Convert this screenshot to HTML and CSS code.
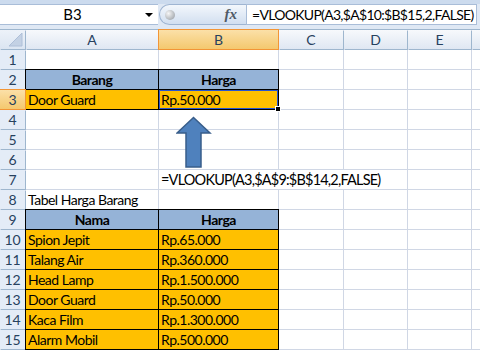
FILE: index.html
```html
<!DOCTYPE html>
<html>
<head>
<meta charset="utf-8">
<link rel="stylesheet" href="styles.css">
</head>
<body>
<div class="fbar">
  <div class="namebox"><span class="ref">B3</span><span class="drop"></span></div>
  <div class="fxbox"><span class="ball"></span><span class="fx">fx</span></div>
  <div class="finput">=VLOOKUP(A3,$A$10:$B$15,2,FALSE)</div>
</div>
<div class="sheet">
  <div class="corner"><svg width="25" height="19" viewBox="0 0 25 19"><polygon points="22,3 22,16 9,16" fill="#c3d1e4" stroke="#aebfd8" stroke-width="1"/></svg></div>
  <div class="ch">A</div><div class="ch sel">B</div><div class="ch">C</div><div class="ch">D</div><div class="ch">E</div><div class="ch"></div>

  <div class="rh">1</div><div class="c"></div><div class="c"></div><div class="c"></div><div class="c"></div><div class="c"></div><div class="c"></div>
  <div class="rh">2</div><div class="c hdr">Barang</div><div class="c hdr">Harga</div><div class="c"></div><div class="c"></div><div class="c"></div><div class="c"></div>
  <div class="rh sel">3</div><div class="c org">Door Guard</div><div class="c org cur">Rp.50.000</div><div class="c"></div><div class="c"></div><div class="c"></div><div class="c"></div>
  <div class="rh">4</div><div class="c"></div><div class="c"></div><div class="c"></div><div class="c"></div><div class="c"></div><div class="c"></div>
  <div class="rh">5</div><div class="c"></div><div class="c"></div><div class="c"></div><div class="c"></div><div class="c"></div><div class="c"></div>
  <div class="rh">6</div><div class="c"></div><div class="c"></div><div class="c"></div><div class="c"></div><div class="c"></div><div class="c"></div>
  <div class="rh">7</div><div class="c"></div><div class="c span3 formula">=VLOOKUP(A3,$A$9:$B$14,2,FALSE)</div><div class="c"></div><div class="c"></div>
  <div class="rh">8</div><div class="c">Tabel Harga Barang</div><div class="c"></div><div class="c"></div><div class="c"></div><div class="c"></div><div class="c"></div>
  <div class="rh">9</div><div class="c hdr">Nama</div><div class="c hdr">Harga</div><div class="c"></div><div class="c"></div><div class="c"></div><div class="c"></div>
  <div class="rh">10</div><div class="c org">Spion Jepit</div><div class="c org">Rp.65.000</div><div class="c"></div><div class="c"></div><div class="c"></div><div class="c"></div>
  <div class="rh">11</div><div class="c org">Talang Air</div><div class="c org">Rp.360.000</div><div class="c"></div><div class="c"></div><div class="c"></div><div class="c"></div>
  <div class="rh">12</div><div class="c org">Head Lamp</div><div class="c org">Rp.1.500.000</div><div class="c"></div><div class="c"></div><div class="c"></div><div class="c"></div>
  <div class="rh">13</div><div class="c org">Door Guard</div><div class="c org">Rp.50.000</div><div class="c"></div><div class="c"></div><div class="c"></div><div class="c"></div>
  <div class="rh">14</div><div class="c org">Kaca Film</div><div class="c org">Rp.1.300.000</div><div class="c"></div><div class="c"></div><div class="c"></div><div class="c"></div>
  <div class="rh">15</div><div class="c org">Alarm Mobil</div><div class="c org">Rp.500.000</div><div class="c"></div><div class="c"></div><div class="c"></div><div class="c"></div>

  <svg class="arrow" width="36" height="54" viewBox="0 0 36 54"><polygon points="17.5,1.5 34,17 25,17 25,51 10,51 10,17 1,17" fill="#4f81bd" stroke="#385d8a" stroke-width="1.5" stroke-linejoin="miter"/></svg>
</div>
</body>
</html>
```
FILE: styles.css
```css
body {
  margin: 0;
  width: 480px;
  height: 350px;
  overflow: hidden;
  background: #fff;
  font-family: Lato, "Liberation Sans", sans-serif;
  font-size: 14px;
  color: #000;
}

.fbar {
  height: 29px;
  box-sizing: border-box;
  padding-top: 4px;
  display: flex;
  align-items: flex-start;
  background: linear-gradient(#ccdbee 0, #ccdbee 4px, #dfe8f4 4px);
}

.namebox {
  width: 158px;
  height: 21px;
  box-sizing: border-box;
  background: #fff;
  border-top: 1px solid #a9bdd8;
  border-bottom: 1px solid #a9bdd8;
  display: flex;
  align-items: center;
}

.namebox .ref {
  flex: 1;
  text-align: center;
  line-height: 19px;
  font-size: 15px;
}

.namebox .drop {
  width: 0;
  height: 0;
  margin: 0 5px 0 0;
  border-left: 4px solid transparent;
  border-right: 4px solid transparent;
  border-top: 4px solid #000;
}

.fxbox {
  width: 87px;
  height: 21px;
  margin-left: 1px;
  box-sizing: border-box;
  border: 1px solid #9fb5d2;
  border-right: none;
  border-radius: 11px 0 0 11px;
  background: linear-gradient(#f3f7fc, #d2dff0);
  display: flex;
  align-items: center;
  justify-content: space-between;
  padding: 0 9px 0 5px;
}

.ball {
  width: 10px;
  height: 10px;
  border-radius: 50%;
  background: radial-gradient(circle at 35% 35%, #f6f6f6, #8f959c);
}

.fx {
  font-family: "Liberation Serif", serif;
  font-style: italic;
  font-weight: bold;
  font-size: 15px;
  color: #505a66;
}

.finput {
  width: 231px;
  height: 21px;
  box-sizing: border-box;
  background: #fff;
  border: 1px solid #a9bdd8;
  padding-left: 5px;
  line-height: 19px;
  white-space: nowrap;
  overflow: hidden;
  font-size: 14px;
  letter-spacing: -0.7px;
}

.sheet {
  position: relative;
  display: grid;
  grid-template-columns: 25px 132px 119px 64px 63px 63px 1fr;
  grid-template-rows: repeat(16, 19px);
  gap: 1px;
  padding-bottom: 1px;
  background: #d0d7e5;
  border-top: 1px solid #9eb6ce;
}

.corner {
  background: linear-gradient(#edf2f9, #dbe5f2);
  box-shadow: 1px 1px 0 #9eb6ce;
}

.corner svg {
  display: block;
}

.ch {
  background: linear-gradient(#f7f9fc, #dfe7f2);
  box-shadow: 1px 1px 0 #9eb6ce;
  text-align: center;
  line-height: 20px;
  color: #27415e;
}

.rh {
  background: #e4ecf7;
  box-shadow: 1px 1px 0 #9eb6ce;
  text-align: center;
  line-height: 20px;
  color: #27415e;
}

.ch.sel,
.rh.sel {
  background: linear-gradient(#fbe0a8, #f4c86e);
  box-shadow: 0 0 0 1px #f29536;
  position: relative;
}

.c {
  background: #fff;
  line-height: 20px;
  padding: 0 2px;
  white-space: nowrap;
  overflow: visible;
  letter-spacing: -0.5px;
}

.c.formula {
  font-size: 14.5px;
  letter-spacing: -0.8px;
}

.span3 {
  grid-column: span 3;
}

.hdr {
  background: #95b3d7;
  font-weight: bold;
  text-align: center;
  box-shadow: 0 0 0 1px #000;
}

.org {
  background: #ffc000;
  box-shadow: 0 0 0 1px #000;
}

.cur {
  position: relative;
  box-shadow: 0 0 0 1px #000, inset 0 0 0 1px #2855d0;
}

.cur::after {
  content: "";
  position: absolute;
  right: -3px;
  bottom: -3px;
  width: 4px;
  height: 4px;
  background: #000;
  border: 1px solid #fff;
  box-sizing: content-box;
}

.arrow {
  position: absolute;
  left: 176px;
  top: 86px;
}
```
